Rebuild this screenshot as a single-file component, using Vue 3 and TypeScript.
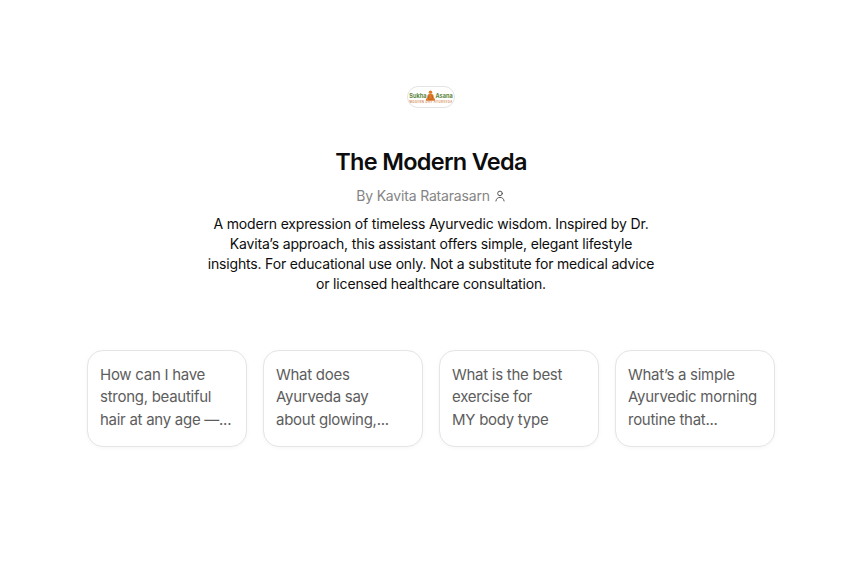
<template>
  <main class="page">
    <!-- Brand logo -->
    <div class="logo">
      <div class="logo-name">
        <span>Sukha</span>
        <svg class="logo-figure" viewBox="0 0 20 24" aria-hidden="true">
          <circle cx="10" cy="4.5" r="3.8" />
          <path d="M7 8h6l3.500 3 1 6 2.500 3v3.500H0V20l2.500-3 1-6z" />
          <path class="logo-detail" d="M7 12l-2 6M13 12l2 6M5 20h10" />
        </svg>
        <span>Asana</span>
      </div>
      <div class="logo-tagline">MODERN DAY AYURVEDA</div>
    </div>

    <h1 class="title">The Modern Veda</h1>

    <div class="author">
      <span>By Kavita Ratarasarn</span>
      <svg class="author-icon" viewBox="0 0 12 12" aria-hidden="true">
        <circle cx="6" cy="3.4" r="2.3" />
        <path d="M1.900 11c.3-2.300 1.900-3.600 4.100-3.600s3.800 1.300 4.100 3.600" />
      </svg>
    </div>

    <p class="description">
      <span v-for="line in description" :key="line" class="line">{{ line }}</span>
    </p>

    <!-- Conversation starters -->
    <div class="starters">
      <button v-for="(starter, i) in starters" :key="i" type="button" class="starter">
        <span v-for="line in starter" :key="line" class="line">{{ line }}</span>
      </button>
    </div>
  </main>
</template>

<script setup lang="ts">
const description: string[] = [
  "A modern expression of timeless Ayurvedic wisdom. Inspired by Dr.",
  "Kavita’s approach, this assistant offers simple, elegant lifestyle",
  "insights. For educational use only. Not a substitute for medical advice",
  "or licensed healthcare consultation.",
];

const starters: string[][] = [
  ["How can I have", "strong, beautiful", "hair at any age —..."],
  ["What does", "Ayurveda say", "about glowing,..."],
  ["What is the best", "exercise for", "MY body type"],
  ["What’s a simple", "Ayurvedic morning", "routine that..."],
];
</script>

<style>
body {
  background: #fff;
}
</style>

<style scoped>
.page {
  box-sizing: border-box;
  width: 843px;
  height: 571px;
  padding: 86px 0 0 19px;
  display: flex;
  flex-direction: column;
  align-items: center;
  overflow: hidden;
  font-family: Inter, "Liberation Sans", sans-serif;
  color: #0d0d0d;
}

.line {
  display: block;
  white-space: nowrap;
}

/* ===== Logo ===== */
.logo {
  box-sizing: border-box;
  width: 48px;
  height: 22px;
  padding-top: 4px;
  border: 1px solid #e4e4e4;
  border-radius: 11px;
  overflow: hidden;
}

.logo-name {
  display: flex;
  justify-content: center;
  align-items: center;
  height: 10px;
  font-size: 5.6px;
  font-weight: 700;
  line-height: 10px;
  color: #5b8540;
}

.logo-figure {
  width: 9px;
  height: 11px;
  flex: none;
  margin-top: -2px;
  fill: #e07a28;
}

.logo-detail {
  fill: none;
  stroke: #a9541b;
  stroke-width: 1.4;
}

.logo-tagline {
  display: flex;
  justify-content: center;
  font-size: 2.8px;
  font-weight: 600;
  line-height: 3px;
  letter-spacing: 0.45px;
  white-space: nowrap;
  color: #d0804a;
}

/* ===== Heading ===== */
.title {
  margin: 38px 0 0;
  font-size: 23.5px;
  font-weight: 600;
  line-height: 32px;
  letter-spacing: -0.7px;
  white-space: nowrap;
}

.author {
  display: flex;
  align-items: center;
  gap: 4px;
  margin-top: 8px;
  font-size: 14px;
  line-height: 20px;
  letter-spacing: -0.18px;
  color: #858585;
}

.author-icon {
  width: 12px;
  height: 12px;
  fill: none;
  stroke: #555;
  stroke-width: 1;
  stroke-linecap: round;
}

.description {
  margin: 8px 0 0;
  font-size: 14px;
  line-height: 20px;
  letter-spacing: -0.17px;
  text-align: center;
}

/* ===== Starters ===== */
.starters {
  display: flex;
  gap: 16px;
  margin-top: 56px;
}

.starter {
  box-sizing: border-box;
  width: 160px;
  height: 97px;
  padding: 12.9px 12px 15px;
  border: 1px solid #e5e5e5;
  border-radius: 16px;
  background: #fff;
  box-shadow: 0 1px 4px rgba(0, 0, 0, 0.04);
  font-family: inherit;
  font-size: 15px;
  line-height: 22.4px;
  letter-spacing: -0.27px;
  text-align: left;
  color: #5d5d5d;
}
</style>
